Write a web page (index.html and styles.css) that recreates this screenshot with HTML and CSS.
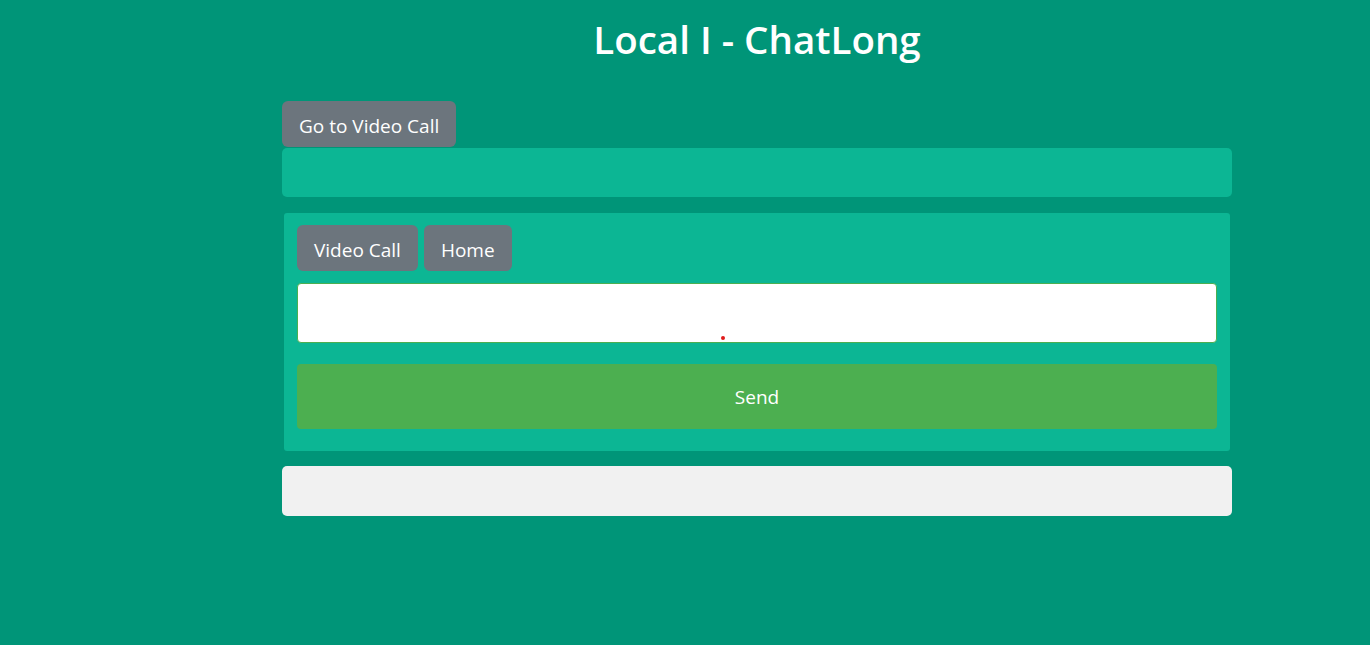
FILE: index.html
```html
<!DOCTYPE html>
<html>
<head>
<meta charset="utf-8">
<link rel="stylesheet" href="styles.css">
</head>
<body>
<div class="container">
  <h1 class="title">Local I - ChatLong</h1>
  <button class="btn btn-gray">Go to Video Call</button>
  <div class="bar-green"></div>
  <div class="panel">
    <div class="btn-row">
      <button class="btn btn-gray">Video Call</button>
      <button class="btn btn-gray">Home</button>
    </div>
    <div class="input-wrap">
      <input class="msg-input" type="text">
      <span class="dot"></span>
    </div>
    <button class="btn-send">Send</button>
  </div>
  <div class="bar-light"></div>
</div>
</body>
</html>
```
FILE: styles.css
```css
html, body {
  margin: 0;
  padding: 0;
}
body {
  background: #009578;
  font-family: "Open Sans", "Noto Sans", sans-serif;
  height: 645px;
}
.container {
  width: 950px;
  margin-left: 282px;
  display: flex;
  flex-direction: column;
  align-items: flex-start;
}
.title {
  align-self: stretch;
  text-align: center;
  color: #fff;
  font-size: 38.5px;
  font-weight: 600;
  margin: 13px 0 0 0;
  height: 88px;
  line-height: 52px;
}
.btn {
  border: none;
  font-family: inherit;
  font-size: 19px;
  color: #fff;
  height: 46px;
  border-radius: 6px;
  padding: 3px 17px 0;
  cursor: pointer;
}
.btn-gray {
  background: #6c757d;
}
.bar-green {
  align-self: stretch;
  height: 49px;
  margin-top: 1px;
  background: #0cb694;
  border-radius: 5px;
  margin-bottom: 16px;
}
.panel {
  align-self: stretch;
  margin: 0 2px;
  background: #0cb694;
  border-radius: 3px;
  padding: 12px 13px 22px;
  display: flex;
  flex-direction: column;
}
.btn-row {
  display: flex;
  gap: 6px;
}
.input-wrap {
  position: relative;
  margin-top: 12px;
}
.msg-input {
  display: block;
  box-sizing: border-box;
  width: 100%;
  height: 60px;
  border: 1px solid #4caf50;
  border-radius: 4px;
  background: #fff;
  outline: none;
}
.dot {
  position: absolute;
  left: 424px;
  top: 53px;
  width: 4px;
  height: 4px;
  border-radius: 50%;
  background: #e01b1b;
}
.btn-send {
  margin-top: 21px;
  height: 65px;
  border: none;
  border-radius: 4px;
  background: #4caf50;
  color: #fff;
  font-family: inherit;
  font-size: 19px;
  padding-top: 2px;
}
.bar-light {
  align-self: stretch;
  margin-top: 15px;
  height: 50px;
  background: #f1f1f1;
  border-radius: 5px;
}
```
